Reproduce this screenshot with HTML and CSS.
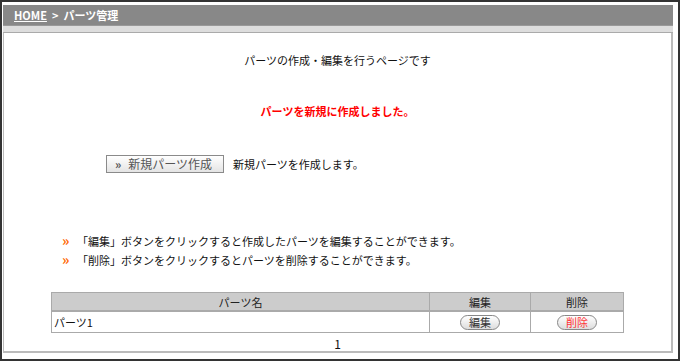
FILE: index.html
```html
<!DOCTYPE html>
<html lang="ja">
<head>
    <meta charset="UTF-8">
    <title>パーツ管理</title>
    <link rel="stylesheet" href="styles.css">
</head>
<body>
    <div class="frame">
        <div class="panel">
            <div class="breadcrumb"><a href="#">HOME</a><span class="sep">&gt;</span>パーツ管理</div>
            <div class="strip"></div>
            <div class="content">
                <p class="lead">パーツの作成・編集を行うページです</p>
                <p class="notice">パーツを新規に作成しました。</p>

                <div class="create">
                    <button class="btn-create"><span class="arrow">»</span>新規パーツ作成</button>
                    <span>新規パーツを作成します。</span>
                </div>

                <ul class="help">
                    <li>「編集」ボタンをクリックすると作成したパーツを編集することができます。</li>
                    <li>「削除」ボタンをクリックするとパーツを削除することができます。</li>
                </ul>

                <table class="parts">
                    <tr>
                        <th class="col-name">パーツ名</th>
                        <th class="col-edit">編集</th>
                        <th class="col-del">削除</th>
                    </tr>
                    <tr>
                        <td>パーツ1</td>
                        <td class="center"><button class="pill">編集</button></td>
                        <td class="center"><button class="pill pill-del">削除</button></td>
                    </tr>
                </table>
                <div class="pager">1</div>
            </div>
        </div>
    </div>
</body>
</html>
```

FILE: styles.css
```css
body {
    margin: 0;
    background-color: #fff;
    font-family: "Noto Sans CJK JP", "Noto Sans", sans-serif;
    font-size: 11px;
    color: #111;
}

.frame {
    box-sizing: border-box;
    width: 680px;
    height: 361px;
    border: 2px solid #333;
    padding: 3px 5px 0 1px;
}

/* header bar */
.breadcrumb {
    height: 20px;
    line-height: 20px;
    background-color: #888;
    color: #fff;
    font-weight: bold;
    padding-left: 11px;
}

.breadcrumb a {
    color: #fff;
}

.breadcrumb .sep {
    margin: 0 5px;
}

.strip {
    height: 6px;
    background-color: #ddd;
    border-top: 1px solid #999;
    border-bottom: 1px solid #aaa;
}

.content {
    height: 320px;
    border-left: 1px solid #bbb;
    border-right: 2px solid #bbb;
    border-bottom: 2px solid #bbb;
    padding-top: 19px;
    box-sizing: border-box;
}

.lead {
    margin: 0;
    text-align: center;
    line-height: 16px;
}

.notice {
    margin: 35px 0 0;
    text-align: center;
    line-height: 16px;
    color: #f00;
    font-weight: bold;
}

.create {
    display: flex;
    align-items: center;
    gap: 9px;
    margin: 36px 0 0 102px;
}

.btn-create {
    width: 118px;
    height: 18px;
    padding: 0 0 0 8px;
    text-align: left;
    font-family: inherit;
    font-size: 12px;
    line-height: 16px;
    color: #555;
    border: 1px solid #8a8a8a;
    border-radius: 0;
    background: linear-gradient(#fff, #e4e4e4);
}

.btn-create .arrow {
    font-weight: bold;
    margin-right: 7px;
}

.help {
    list-style: none;
    margin: 58px 0 0;
    padding: 0 0 0 58px;
}

.help li {
    line-height: 18px;
}

.help li::before {
    content: "»";
    color: #f60;
    font-weight: bold;
    font-size: 14px;
    display: inline-block;
    width: 15px;
}

.parts {
    margin: 23px 0 0 47px;
    width: 573px;
    border-collapse: collapse;
}

.parts th,
.parts td {
    border: 1px solid #aaa;
    padding: 0 2px;
    font-weight: normal;
}

.parts th {
    height: 17px;
    background-color: #ccc;
    border-bottom-width: 2px;
    color: #222;
}

.parts td {
    height: 20px;
}

.col-edit {
    width: 96px;
}

.col-del {
    width: 88px;
}

.center {
    text-align: center;
}

.pill {
    width: 40px;
    height: 15px;
    padding: 0;
    font-family: inherit;
    font-size: 11px;
    line-height: 13px;
    color: #333;
    border: 1px solid #888;
    border-radius: 8px;
    background: linear-gradient(#fff, #ddd);
}

.pill-del {
    color: #f33;
}

.pager {
    text-align: center;
    margin-top: 4px;
    font-size: 12px;
    line-height: 14px;
}
```
